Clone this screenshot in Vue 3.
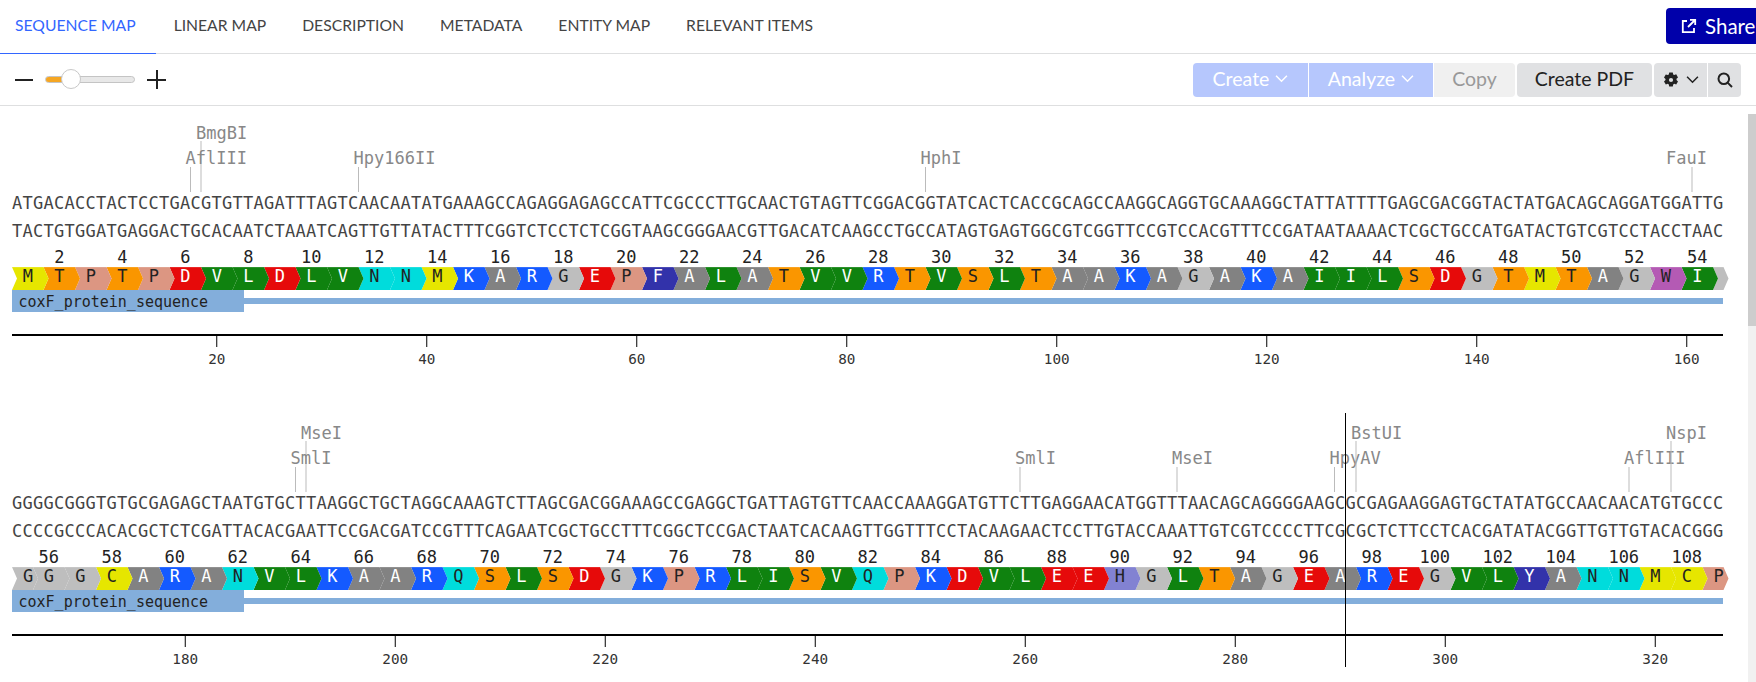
<template>
  <div class="page">
    <div class="topbar">
      <div class="tabs">
        <a v-for="(t, i) in tabs" :key="t" class="tab" :class="{ active: i === 0 }">{{ t }}</a>
      </div>
      <button type="button" class="btn-share">
        <svg width="16" height="16" viewBox="0 0 16 16" fill="none" stroke="#fff" stroke-width="1.8">
          <path d="M6 3H1.8v11.2H13V10" />
          <path d="M9 1.8h5.2V7M14 2 7 9" />
        </svg>
        Share
      </button>
    </div>

    <div class="toolbar">
      <div class="zoom">
        <span class="zoom-minus"></span>
        <div class="slider">
          <span class="slider-fill"></span>
          <span class="slider-thumb"></span>
        </div>
        <span class="zoom-plus"></span>
      </div>
      <div class="actions">
        <div class="group">
          <button type="button" class="btn primary first">Create <svg class="chev" viewBox="0 0 12 8"><path d="M1 1.5 6 6.5 11 1.5" /></svg></button>
          <button type="button" class="btn primary">Analyze <svg class="chev" viewBox="0 0 12 8"><path d="M1 1.5 6 6.5 11 1.5" /></svg></button>
          <button type="button" class="btn copy last">Copy</button>
        </div>
        <button type="button" class="btn gray pdf">Create PDF</button>
        <div class="group">
          <button type="button" class="btn gray first gear">
            <svg width="16" height="16" viewBox="0 0 16 16"><path fill="#222" fill-rule="evenodd" d="M6.2.4h3.6l.4 2 1 .6 2-.7 1.8 3.1-1.5 1.4v1.2l1.5 1.4-1.8 3.1-2-.7-1 .6-.4 2H6.2l-.4-2-1-.6-2 .7L1 9.500l1.500-1.400V6.900L1 5.500l1.800-3.100 2 .7 1-.6zM8 5.900a2.100 2.100 0 1 0 0 4.200 2.100 2.100 0 0 0 0-4.200z" /></svg>
            <svg class="chev dark" viewBox="0 0 12 8"><path d="M1 1.500 6 6.500 11 1.500" /></svg>
          </button>
          <button type="button" class="btn gray last search">
            <svg width="16" height="16" viewBox="0 0 16 16" fill="none" stroke="#222" stroke-width="2"><circle cx="6.800" cy="6.800" r="5.300" /><path d="M10.600 10.600 15 15" /></svg>
          </button>
        </div>
      </div>
    </div>

    <div class="viewer">
      <div class="rows">
        <svg v-for="row in rows" :key="row.offset" class="row" width="1748" height="300" viewBox="0 0 1748 300">
          <g v-for="cut in row.cuts" :key="cut.name + cut.x">
            <line class="cut-line" :x1="cut.x" :x2="cut.x" :y1="cut.up ? 35 : 61" y2="86" />
            <text class="cut-label" :x="cut.tx" :y="cut.up ? 33 : 58">{{ cut.name }}</text>
          </g>

          <text class="seq" :x="row.charX" y="103">{{ row.top }}</text>
          <text class="seq" :x="row.charX" y="131">{{ row.bottom }}</text>

          <g v-for="aa in row.acids" :key="aa.num">
            <path :d="aa.d" :fill="aa.fill" />
            <path :d="aa.top" class="aa-top" />
            <text v-if="aa.showLetter" class="aa-letter" :x="aa.cx" y="176" :fill="aa.text">{{ aa.letter }}</text>
            <text v-if="aa.num % 2 === 0" class="aa-num" :x="aa.numX" y="157">{{ aa.num }}</text>
          </g>

          <rect x="12" y="192" width="1711" height="6" fill="#83aedb" />
          <rect x="12" y="184" width="232" height="22" fill="#83aedb" />
          <text class="ann-label" x="18.5" y="201">coxF_protein_sequence</text>

          <rect x="12" y="228" width="1711" height="2" fill="#000" />
          <g v-for="t in row.ticks" :key="t.label">
            <line class="tick" :x1="t.x" :x2="t.x" y1="230" y2="241" />
            <text class="tick-label" :x="t.x" y="258">{{ t.label }}</text>
          </g>
        </svg>
      </div>
      <span class="cursor"></span>
      <div class="scrollbar"><span class="scroll-thumb"></span></div>
    </div>
  </div>
</template>

<script setup>
const tabs = ['SEQUENCE MAP', 'LINEAR MAP', 'DESCRIPTION', 'METADATA', 'ENTITY MAP', 'RELEVANT ITEMS']

const BASE = 10.5
const LEFT = 12
const pairs = { A: 'T', T: 'A', G: 'C', C: 'G' }

const colors = {
  M: ['#e6e600', '#222'], C: ['#e6e600', '#222'],
  T: ['#fa9600', '#222'], S: ['#fa9600', '#222'],
  P: ['#dc9682', '#222'],
  D: ['#e60a0a', '#fff'], E: ['#e60a0a', '#fff'],
  V: ['#0f820f', '#fff'], L: ['#0f820f', '#fff'], I: ['#0f820f', '#fff'],
  N: ['#00dcdc', '#222'], Q: ['#00dcdc', '#222'],
  K: ['#145aff', '#fff'], R: ['#145aff', '#fff'],
  A: ['#828282', '#fff'],
  G: ['#bebebe', '#222'],
  F: ['#3232aa', '#fff'], Y: ['#3232aa', '#fff'],
  W: ['#b45ab4', '#222'],
  H: ['#8282d2', '#222'],
}

function arrow(x0, x1) {
  const y0 = 161, y1 = 184, mid = 172.5, tip = 5
  return `M${x0} ${y0}H${x1}L${x1 + tip} ${mid}L${x1} ${y1}H${x0}L${x0 + tip} ${mid}Z`
}

function buildAcids(letters, firstNum, firstLen) {
  const out = []
  let start = 0
  letters.split('').forEach((letter, i) => {
    const len = i === 0 ? firstLen : Math.min(3, 163 - start)
    const x0 = LEFT + start * BASE
    const x1 = x0 + len * BASE
    const [fill, text] = colors[letter]
    out.push({
      letter,
      num: firstNum + i,
      fill,
      text,
      d: arrow(x0, x1),
      top: `M${x0} 161H${x1}`,
      cx: len === 3 ? (x0 + x1) / 2 : x0 + 16,
      numX: (x0 + x1) / 2,
      showLetter: len > 1,
    })
    start += len
  })
  // each tip sits on top of the next arrow's notch, so paint right to left
  return out.reverse()
}

function buildRow(offset, top, letters, firstNum, firstLen, cuts, ticks) {
  return {
    offset,
    top,
    bottom: top.split('').map(c => pairs[c]).join(''),
    charX: top.split('').map((_, i) => (LEFT + i * BASE + 0.1).toFixed(1)).join(' '),
    acids: buildAcids(letters, firstNum, firstLen),
    cuts: cuts.map(c => ({ ...c, tx: c.tx ?? c.x - 5 })),
    ticks: ticks.map(t => ({ label: t, x: LEFT + (t - offset - 0.5) * BASE })),
  }
}

const rows = [
  buildRow(
    0,
    'ATGACACCTACTCCTGACGTGTTAGATTTAGTCAACAATATGAAAGCCAGAGGAGAGCCATTCGCCCTTGCAACTGTAGTTCGGACGGTATCACTCACCGCAGCCAAGGCAGGTGCAAAGGCTATTATTTTGAGCGACGGTACTATGACAGCAGGATGGATTG',
    'MTPTPDVLDLVNNMKARGEPFALATVVRTVSLTAAKAGAKAIILSDGTMTAGWIG',
    1,
    3,
    [
      { name: 'BmgBI', x: 201, up: true },
      { name: 'AflIII', x: 190.5 },
      { name: 'Hpy166II', x: 358.5 },
      { name: 'HphI', x: 925.5 },
      { name: 'FauI', x: 1692, tx: 1666 },
    ],
    [20, 40, 60, 80, 100, 120, 140, 160],
  ),
  buildRow(
    163,
    'GGGGCGGGTGTGCGAGAGCTAATGTGCTTAAGGCTGCTAGGCAAAGTCTTAGCGACGGAAAGCCGAGGCTGATTAGTGTTCAACCAAAGGATGTTCTTGAGGAACATGGTTTAACAGCAGGGGAAGCGCGAGAAGGAGTGCTATATGCCAACAACATGTGCCC',
    'GGGCARANVLKAARQSLSDGKPRLISVQPKDVLEEHGLTAGEAREGVLYANNMCP',
    55,
    2,
    [
      { name: 'MseI', x: 306, up: true },
      { name: 'SmlI', x: 295.5 },
      { name: 'SmlI', x: 1020 },
      { name: 'MseI', x: 1177 },
      { name: 'HpyAV', x: 1334.5 },
      { name: 'BstUI', x: 1356, up: true },
      { name: 'AflIII', x: 1629 },
      { name: 'NspI', x: 1671, up: true },
    ],
    [180, 200, 220, 240, 260, 280, 300, 320],
  ),
]
</script>

<style>
html, body { margin: 0; height: 100%; overflow: hidden; background: #fff; }
</style>

<style scoped>
.page {
  height: 682px;
  overflow: hidden;
  display: flex;
  flex-direction: column;
  font-family: Lato, "Open Sans", sans-serif;
  color: #333;
}

.topbar {
  height: 53px;
  flex: none;
  display: flex;
  justify-content: space-between;
  align-items: flex-start;
  border-bottom: 1px solid #dedfe0;
}
.tabs { display: flex; }
.tab {
  height: 54px;
  box-sizing: border-box;
  padding: 0 18px 4px;
  display: flex;
  align-items: center;
  font-size: 15.7px;
  color: #444;
  white-space: nowrap;
}
.tab.active { padding-left: 15px; padding-right: 20px; color: #3366ff; border-bottom: 1px solid #3366ff; }
.btn-share {
  width: 100px;
  height: 36px;
  margin-top: 8px;
  margin-right: -10px;
  padding: 0 0 0 15px;
  display: flex;
  align-items: center;
  gap: 8px;
  border: none;
  border-radius: 4px;
  background: #0000aa;
  color: #fff;
  font: 20.5px Lato, sans-serif;
  white-space: nowrap;
}

.toolbar {
  height: 52px;
  flex: none;
  box-sizing: border-box;
  display: flex;
  justify-content: space-between;
  align-items: center;
  padding: 0 15px;
  border-bottom: 1px solid #dedfe0;
}
.zoom { display: flex; align-items: center; gap: 12px; }
.zoom-minus { width: 18px; height: 2px; background: #222; }
.zoom-plus { position: relative; width: 19px; height: 19px; }
.zoom-plus::before, .zoom-plus::after { content: ''; position: absolute; background: #222; }
.zoom-plus::before { left: 0; right: 0; top: 8.5px; height: 2px; }
.zoom-plus::after { top: 0; bottom: 0; left: 8.5px; width: 2px; }
.slider {
  position: relative;
  width: 90px;
  height: 7px;
  box-sizing: border-box;
  background: #e8e8e8;
  border: 1px solid #c4c4c4;
  border-radius: 4px;
}
.slider-fill { position: absolute; left: 0; top: 0; bottom: 0; width: 17px; background: #f5a623; border-radius: 3px 0 0 3px; }
.slider-thumb {
  position: absolute;
  left: 15px;
  top: -8px;
  width: 20px;
  height: 20px;
  box-sizing: border-box;
  background: #fff;
  border: 1px solid #c8c8c8;
  border-radius: 50%;
}

.actions { display: flex; align-items: center; gap: 2px; }
.group { display: flex; gap: 1px; }
.btn {
  height: 34px;
  padding: 0 0 2px;
  display: flex;
  align-items: center;
  justify-content: center;
  gap: 6px;
  border: none;
  font: 19.5px Lato, sans-serif;
}
.btn.first { border-radius: 4px 0 0 4px; }
.btn.last { border-radius: 0 4px 4px 0; }
.primary { width: 124px; background: #b6c7fd; color: #fff; }
.primary.first { width: 115px; }
.copy { width: 81px; background: #f0f0f0; color: #999; }
.gray { background: #e0e1e3; color: #222; }
.pdf { width: 135px; border-radius: 4px; }
.gear { width: 53px; gap: 7px; padding: 0; }
.search { width: 33px; padding: 0; }
.chev { width: 13px; height: 9px; fill: none; stroke: #fff; stroke-width: 1.4; }
.chev.dark { stroke: #222; }

.viewer { position: relative; flex: 1; min-height: 0; overflow: hidden; }
.row { display: block; }
.cursor { position: absolute; left: 1345px; top: 307px; width: 1px; height: 254px; background: #000; }
.scrollbar { position: absolute; right: 0; top: 8px; bottom: 0; width: 8px; background: #f1f1f1; }
.scroll-thumb { position: absolute; left: 0; right: 0; top: 0; height: 212px; background: #cdcdcd; }

.seq, .cut-label, .aa-letter, .aa-num, .ann-label, .tick-label { font-family: "DejaVu Sans Mono", monospace; }
.seq { font-size: 17px; fill: #444; }
.cut-label { font-size: 17px; fill: #888; }
.cut-line { stroke: #bbb; stroke-width: 1; }
.aa-num { font-size: 17px; fill: #222; text-anchor: middle; }
.aa-letter { font-size: 17px; text-anchor: middle; }
.aa-top { stroke: #fff; stroke-opacity: .25; stroke-width: 1; fill: none; }
.ann-label { font-size: 15px; fill: #222; }
.tick { stroke: #000; stroke-width: 1; }
.tick-label { font-size: 14.3px; fill: #333; text-anchor: middle; }
</style>
